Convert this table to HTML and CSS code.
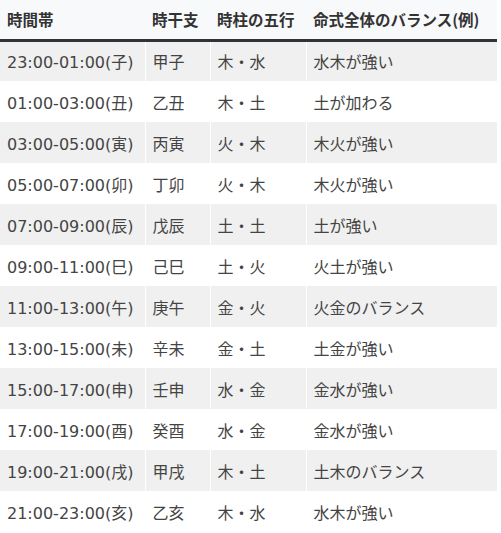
FILE: index.html
```html
<!DOCTYPE html>
<html lang="ja">
<head>
<meta charset="utf-8">
<link rel="stylesheet" href="styles.css">
</head>
<body>
<table class="tbl">
<thead>
<tr><th class="c1">時間帯</th><th class="c2">時干支</th><th class="c3">時柱の五行</th><th class="c4">命式全体のバランス(例)</th></tr>
</thead>
<tbody>
<tr><td>23:00-01:00(子)</td><td>甲子</td><td>木・水</td><td>水木が強い</td></tr>
<tr><td>01:00-03:00(丑)</td><td>乙丑</td><td>木・土</td><td>土が加わる</td></tr>
<tr><td>03:00-05:00(寅)</td><td>丙寅</td><td>火・木</td><td>木火が強い</td></tr>
<tr><td>05:00-07:00(卯)</td><td>丁卯</td><td>火・木</td><td>木火が強い</td></tr>
<tr><td>07:00-09:00(辰)</td><td>戊辰</td><td>土・土</td><td>土が強い</td></tr>
<tr><td>09:00-11:00(巳)</td><td>己巳</td><td>土・火</td><td>火土が強い</td></tr>
<tr><td>11:00-13:00(午)</td><td>庚午</td><td>金・火</td><td>火金のバランス</td></tr>
<tr><td>13:00-15:00(未)</td><td>辛未</td><td>金・土</td><td>土金が強い</td></tr>
<tr><td>15:00-17:00(申)</td><td>壬申</td><td>水・金</td><td>金水が強い</td></tr>
<tr><td>17:00-19:00(酉)</td><td>癸酉</td><td>水・金</td><td>金水が強い</td></tr>
<tr><td>19:00-21:00(戌)</td><td>甲戌</td><td>木・土</td><td>土木のバランス</td></tr>
<tr><td>21:00-23:00(亥)</td><td>乙亥</td><td>木・水</td><td>水木が強い</td></tr>
</tbody>
</table>
</body>
</html>
```
FILE: styles.css
```css
html, body {
  margin: 0;
  padding: 0;
  background: #ffffff;
}
body {
  font-family: "Noto Sans CJK JP", "Noto Sans", sans-serif;
  color: #444444;
}
.tbl {
  width: 497px;
  border-collapse: collapse;
  table-layout: fixed;
  font-size: 16px;
}
.tbl th {
  background: #f8f9fb;
  color: #333333;
  font-weight: bold;
  font-size: 15.5px;
  text-align: left;
  height: 40px;
  padding: 0 7px;
  border-bottom: 3px solid #333333;
  box-sizing: border-box;
  white-space: nowrap;
}
.tbl .c1 { width: 145px; }
.tbl .c2 { width: 65px; }
.tbl .c3 { width: 96px; }
.tbl td {
  height: 41px;
  padding: 0 7px;
  box-sizing: border-box;
  white-space: nowrap;
  border-left: 1px solid #ffffff;
  font-family: "DejaVu Sans", "Noto Sans CJK JP", sans-serif;
  font-size: 16px;
}
.tbl td:first-child {
  border-left: none;
}
.tbl tbody tr:nth-child(odd) td {
  background: #f0f0f0;
}
```
